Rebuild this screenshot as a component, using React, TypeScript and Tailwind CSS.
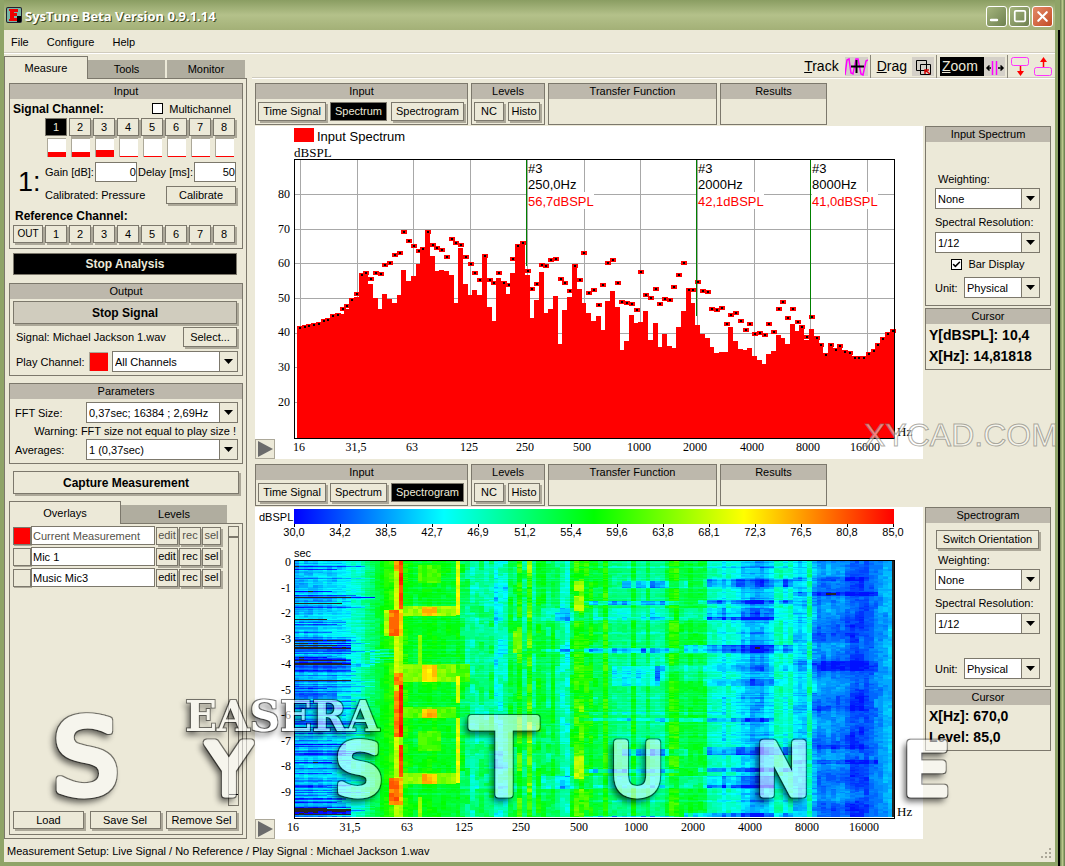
import React from "react";
import { Check, Minus, Square, X } from "lucide-react";

const channels = [1, 2, 3, 4, 5, 6, 7, 8];

// Bar tops and peak dots, one entry per 1/12 octave, in thirds of a pixel
const bars = [
  530, 528, 525, 522, 519, 509, 506, 494, 491, 491, 478, 445, 441, 371, 366, 402, 444, 478, 432, 447, 459,
  435, 360, 393, 378, 342, 293, 240, 318, 363, 360, 363, 375, 459, 294, 402, 435, 420, 435, 312, 471, 514,
  384, 396, 432, 369, 282, 274, 375, 504, 450, 366, 489, 477, 438, 582, 480, 441, 342, 417, 459, 489, 514,
  498, 540, 453, 423, 471, 600, 573, 495, 519, 516, 483, 570, 519, 591, 552, 588, 594, 531, 483, 416, 459,
  525, 552, 564, 591, 609, 606, 606, 531, 573, 597, 600, 594, 618, 630, 642, 612, 603, 555, 564, 582, 522,
  543, 526, 570, 537, 560, 580, 611, 580, 596, 584, 602, 606, 619, 619, 619, 608, 598, 580, 563, 548, 538,
];

const peaks = [
  533, 530, 527, 524, 521, 512, 509, 497, 494, 477, 468, 450, 432, 374, 369, 387, 369, 372, 345, 339, 315,
  309, 246, 272, 288, 303, 296, 246, 285, 294, 300, 321, 267, 279, 285, 321, 342, 369, 390, 318, 390, 399,
  369, 399, 405, 327, 288, 279, 363, 417, 402, 345, 348, 330, 327, 387, 399, 423, 348, 390, 309, 429, 420,
  465, 405, 339, 330, 399, 456, 459, 462, 480, 366, 435, 444, 417, 462, 447, 450, 411, 375, 339, 420, 420,
  396, 423, 426, 477, 480, 474, 522, 495, 489, 513, 540, 522, 552, 549, 555, 522, 546, 477, 456, 504, 477,
  516, 531, 561, 501, 564, 584, 614, 584, 600, 588, 606, 608, 624, 624, 624, 612, 602, 584, 567, 552, 542,
];

const frequencies = ["16", "31,5", "63", "125", "250", "500", "1000", "2000", "4000", "8000", "16000"];

const markers = [
  { x: 271, end: 140, freq: "250,0Hz", level: "56,7dBSPL" },
  { x: 441, end: 190, freq: "2000Hz", level: "42,1dBSPL" },
  { x: 555, end: 193, freq: "8000Hz", level: "41,0dBSPL" },
];

// Mean level in dB for each column of the spectrogram
const columns = [
  41, 41, 41, 41, 41, 42, 42, 42, 42, 43, 43, 44, 46, 46, 48, 50, 52, 54, 56, 58, 60, 68, 66, 59, 57, 55, 56,
  57, 57, 57, 56, 56, 56, 55, 57, 54, 52, 49, 50, 51, 50, 52, 46, 47, 48, 55, 53, 60, 52, 62, 51, 56, 54, 52,
  55, 51, 48, 47, 55, 60, 61, 58, 57, 54, 54, 60, 52, 51, 51, 51, 50, 57, 50, 50, 54, 50, 50, 50, 55, 60,
  60, 55, 54, 56, 55, 55, 55, 48, 48, 47, 44, 48, 46, 45, 42, 42, 40, 40, 40, 42, 43, 49, 49, 45, 48, 43,
  42, 42, 49, 40, 37, 37, 38, 37, 37, 37, 36, 34, 34, 34, 34, 36, 37, 38, 39, 40,
];

const rand = (a: number, b: number) => {
  const n = Math.sin(a * 12.9898 + b * 78.233) * 43758.5453;
  return n - Math.floor(n);
};

// [first column, last column, top, bottom, level]
const hot = [
  [22, 22, 0, 48, 82], [21, 21, 0, 10, 76], [20, 21, 49, 75, 79], [19, 19, 49, 75, 67], [22, 22, 49, 75, 74],
  [21, 22, 112, 124, 79], [22, 22, 124, 176, 84], [21, 21, 130, 176, 78], [22, 22, 184, 216, 82],
  [20, 21, 217, 244, 79], [22, 22, 217, 244, 75], [23, 33, 45, 55, 66], [27, 29, 46, 55, 75],
  [23, 33, 103, 121, 64], [34, 36, 103, 121, 61], [27, 29, 104, 121, 73], [23, 33, 146, 157, 62],
  [27, 29, 148, 157, 75], [23, 33, 212, 223, 65], [27, 29, 213, 223, 75], [34, 34, 0, 54, 70],
  [34, 34, 115, 142, 70], [34, 34, 157, 222, 70], [26, 26, 74, 103, 64], [26, 30, 4, 22, 61],
  [26, 30, 170, 190, 61], [26, 26, 236, 256, 66], [49, 49, 0, 12, 66], [49, 49, 161, 182, 66],
  [59, 60, 20, 30, 67], [59, 60, 35, 50, 67], [59, 60, 195, 218, 67], [46, 47, 70, 92, 64],
];

// [first column, last column, top, bottom, drop], repeating every 168px
const cold = [
  [69, 82, 20, 27, 13], [86, 104, 18, 26, 10], [61, 80, 40, 44, 13], [85, 104, 39, 43, 10], [86, 102, 47, 59, 6],
  [63, 86, 47, 56, 6], [63, 100, 56, 59, 9], [61, 80, 87, 92, 14], [82, 104, 84, 92, 12], [52, 62, 88, 91, 8],
  [67, 76, 105, 125, 9], [76, 86, 105, 120, 5], [77, 104, 104, 110, 6], [86, 102, 118, 125, 7],
  [76, 100, 157, 161, 10], [60, 76, 157, 160, 9], [60, 90, 151, 154, 6], [105, 120, 16, 20, 4],
  [105, 122, 31, 35, 5], [105, 118, 72, 82, 3], [105, 122, 100, 110, 4], [105, 120, 145, 150, 3],
  [52, 62, 47, 60, 6], [41, 44, 22, 40, 5], [35, 60, 57, 59, 5], [60, 103, 5, 7, 4], [60, 103, 71, 73, 4],
  [60, 103, 136, 138, 4],
];

const deep = [[78, 90, 13], [98, 104, 16], [105, 110, 10], [248, 256, 16]];

const levelAt = (col: number, y: number) => {
  const t = y % 168;
  const spread = col > 34 && col < 64 ? 7 : 3;
  let level = columns[col] + (rand(col, Math.floor((y + col * 3) / 9)) - 0.5) * spread + (rand(col, y >> 1) - 0.5) * 2;
  if (col < 17) {
    const streak = rand(7, y);
    const reach = 6 + rand(3, y) * 11;
    level += (rand(5, y) - 0.5) * 4;
    if (streak > 0.55 && col < reach) level -= (streak - 0.4) * 16;
    if (streak > 0.975 && col < reach) level = 28;
    if (col < 12) {
      deep.forEach(([top, bottom, drop]) => {
        if (y >= top && y < bottom) level -= drop * rand(11, y);
      });
    }
  }
  if (col >= 16 && col < 21 && y >= 88 && y < 102) level -= 14 * rand(Math.floor(col / 3), y);
  if (col > 22 && col < 110 && rand(21, y) > 0.8) level -= 2.5;
  cold.forEach(([a, b, top, bottom, drop]) => {
    if (col >= a && col <= b && t >= top && t < bottom) level -= drop * (0.4 + rand(col, top) * 0.7);
  });
  if (col >= 108 && col < 120) level += Math.sin(y / 6 + col / 9) * 1.5;
  if (col >= 12) level = Math.max(level, 31);
  hot.forEach(([a, b, top, bottom, value]) => {
    if (col >= a && col <= b && y >= top && y < bottom) level = value + (rand(col, y >> 2) - 0.5) * 4;
  });
  if ((col > 111 && col < 114 && y > 31 && y < 34) || (col === 97 && y > 85 && y < 88)) level = 28;
  return level;
};

const stops = [[0, 0, 255], [0, 255, 255], [0, 255, 0], [255, 255, 0], [255, 0, 0]];

const shade = (step: number) => {
  if (step < 0) return "#262626";
  const p = Math.min(step / 15, 3.999);
  const i = Math.floor(p);
  const rgb = stops[i].map((c, k) => Math.round(c + (stops[i + 1][k] - c) * (p - i)));
  return `rgb(${rgb.join(",")})`;
};

// Cells of the same shade share one path
const cells = () => {
  const paths: Record<number, string> = {};
  for (let col = 0; col < columns.length; col++) {
    const x = 39 + Math.round(col * 4.75);
    const w = 39 + Math.round((col + 1) * 4.75) - x;
    let start = 0;
    let last = NaN;
    for (let y = 0; y <= 256; y++) {
      const level = levelAt(col, y);
      const step = level < 29 ? -1 : Math.max(0, Math.min(60, Math.round(((level - 30) / 55) * 60)));
      if (y === 256 || step !== last) {
        if (y > 0) paths[last] = (paths[last] || "") + `M${x} ${54 + start}h${w}v${y - start}h${-w}z`;
        start = y;
        last = step;
      }
    }
  }
  return Object.entries(paths);
};

const Btn = ({ children, className = "", active = false }: { children?: React.ReactNode; className?: string; active?: boolean }) => (
  <button
    className={`flex items-center justify-center border border-[#7c786c] whitespace-nowrap leading-none ${
      active ? "bg-black text-[#ece9d8]" : "bg-[#ece9d8] shadow-[2px_2px_0_#aca899]"
    } ${className}`}
  >
    {children}
  </button>
);

const Group = ({ title, children, className = "" }: { title: string; children?: React.ReactNode; className?: string }) => (
  <section className={`border border-[#7c786c] ${className}`}>
    <h2 className="h-[15px] bg-[#bdb8ac] text-center leading-[15px]">{title}</h2>
    {children}
  </section>
);

const Combo = ({ id, value, className = "" }: { id: string; value: string; className?: string }) => (
  <div className={`relative h-[21px] ${className}`}>
    <select
      id={id}
      className="h-full w-full appearance-none border border-[#7c786c] bg-white pl-[2px] pr-5 outline-none"
    >
      <option>{value}</option>
    </select>
    <span className="pointer-events-none absolute inset-y-px right-px flex w-[18px] items-center justify-center border-l border-[#7c786c] bg-[#ece9d8]">
      <svg width="9" height="5" viewBox="0 0 9 5">
        <path d="M0 0h9L4.500 5z" />
      </svg>
    </span>
  </div>
);

const Tab = ({ children, className = "" }: { children: React.ReactNode; className?: string }) => (
  <button className={`mb-px h-[18px] bg-[#b0ad9f] ${className}`}>{children}</button>
);

const InputGroup = () => (
  <Group title="Input" className="h-[166px]">
    <div className="flex h-[19px] items-center justify-between pl-[3px] pr-[11px]">
      <b className="text-[12px]">Signal Channel:</b>
      <label className="flex items-center gap-[6px]">
        <input type="checkbox" className="size-[11px] appearance-none border border-black bg-white" />
        Multichannel
      </label>
    </div>
    <div className="flex gap-[2px] pl-[35px]">
      {channels.map((c) => (
        <Btn key={c} active={c === 1} className="h-[18px] w-[22px]">{c}</Btn>
      ))}
    </div>
    <div className="mt-[2px] flex gap-[5px] pl-[37px]">
      {channels.map((c) => (
        <div key={c} className="flex h-[19px] w-[19px] flex-col justify-end border-l border-t border-[#aca899] bg-white">
          <div className={`bg-[#f00] ${c === 3 ? "h-[7px]" : c < 3 ? "h-[5px]" : "h-px"}`} />
        </div>
      ))}
    </div>
    <div className="mt-[5px] flex">
      <div className="w-[35px] pl-2 pt-1 text-[27px] leading-[32px]">1:</div>
      <div className="min-w-0 flex-1 pr-[6px]">
        <div className="flex items-center justify-between whitespace-nowrap">
          <label htmlFor="gain">Gain [dB]:</label>
          <input id="gain" defaultValue="0" className="h-5 w-[42px] border border-[#7c786c] bg-white text-right" />
          <label htmlFor="delay">Delay [ms]:</label>
          <input id="delay" defaultValue="50" className="h-5 w-[42px] border border-[#7c786c] bg-white text-right" />
        </div>
        <div className="mt-1 flex items-center justify-between">
          <span>Calibrated: Pressure</span>
          <Btn className="h-[18px] w-[70px]">Calibrate</Btn>
        </div>
      </div>
    </div>
    <b className="block pl-[5px] pt-1 text-[12px] leading-[17px]">Reference Channel:</b>
    <div className="flex gap-[2px] pl-[3px]">
      <Btn className="h-[18px] w-[30px] text-[10px]">OUT</Btn>
      {channels.map((c) => (
        <Btn key={c} className="h-[18px] w-[22px]">{c}</Btn>
      ))}
    </div>
  </Group>
);

const overlays = [
  { name: "Current Measurement", color: "bg-[#f00]", text: "text-[#55524a]" },
  { name: "Mic 1", color: "bg-[#ece9d8]", text: "text-black" },
  { name: "Music Mic3", color: "bg-[#ece9d8]", text: "text-black" },
];

const Overlays = () => (
  <div className="mt-[7px] flex flex-1 flex-col">
    <div className="relative z-10 -mb-px flex items-end">
      <button className="h-[23px] w-[112px] border border-b-0 border-[#7c786c] bg-[#ece9d8]">Overlays</button>
      <Tab className="w-[106px]">Levels</Tab>
    </div>
    <div className="flex flex-1 flex-col border border-[#7c786c] px-[3px] pb-[5px] pt-[2px]">
      <div className="flex flex-1 justify-between">
        <div className="flex flex-col gap-[2px]">
          {overlays.map((o) => (
            <div key={o.name} className={`flex h-[19px] items-center ${o.text}`}>
              <button aria-label={`Color of ${o.name}`} className={`h-[18px] w-[18px] border border-[#7c786c] shadow-[1px_1px_0_#aca899] ${o.color}`} />
              <input aria-label="Overlay name" defaultValue={o.name} className="h-[19px] w-[124px] border border-[#7c786c] bg-white px-px" />
              <Btn className="ml-px h-[18px] w-[22px]">edit</Btn>
              <Btn className="ml-px h-[18px] w-[22px]">rec</Btn>
              <Btn className="ml-px h-[18px] w-[19px]">sel</Btn>
            </div>
          ))}
        </div>
        <div className="flex w-[11px] flex-col justify-between border border-[#7c786c]">
          <div className="h-[11px] border-b-2 border-[#7c786c]" />
          <div className="h-[11px] border-t border-black" />
        </div>
      </div>
      <div className="mt-[5px] flex justify-between pr-[2px]">
        <Btn className="h-[18px] w-[71px]">Load</Btn>
        <Btn className="h-[18px] w-[71px]">Save Sel</Btn>
        <Btn className="h-[18px] w-[71px]">Remove Sel</Btn>
      </div>
    </div>
  </div>
);

const LeftPanel = () => (
  <aside className="flex w-[243px] shrink-0 flex-col pt-[2px]">
    <div className="relative z-10 -mb-px flex items-end">
      <button className="h-[23px] w-[84px] border border-b-0 border-[#7c786c] bg-[#ece9d8]">Measure</button>
      <Tab className="w-[77px]">Tools</Tab>
      <Tab className="ml-[2px] w-[78px]">Monitor</Tab>
    </div>
    <div className="flex flex-1 flex-col border border-[#7c786c] pb-[3px] pl-1 pr-[3px] pt-1">
      <InputGroup />
      <Btn active className="ml-1 mr-[6px] mt-1 h-[22px] text-[12px] font-bold">Stop Analysis</Btn>
      <Group title="Output" className="mt-2 h-[93px]">
        <button className="ml-[3px] mt-[2px] flex h-[23px] w-[224px] items-center justify-center border border-[#7c786c] bg-[#d0ccbe] text-[12px] font-bold shadow-[2px_2px_0_#aca899]">
          Stop Signal
        </button>
        <div className="mt-[3px] flex items-center justify-between pl-[6px] pr-[5px]">
          <span className="whitespace-nowrap">Signal: Michael Jackson 1.wav</span>
          <Btn className="h-5 w-[54px]">Select...</Btn>
        </div>
        <div className="mt-1 flex items-center pl-[6px] pr-1">
          <label htmlFor="play" className="flex-1">Play Channel:</label>
          <span className="mr-1 size-[19px] border-l border-t border-[#aca899] bg-[#f00]" />
          <Combo id="play" value="All Channels" className="w-[126px]" />
        </div>
      </Group>
      <Group title="Parameters" className="mt-[7px] h-[81px]">
        <div className="mt-[3px] flex items-center justify-between pl-[5px] pr-1">
          <label htmlFor="fft">FFT Size:</label>
          <Combo id="fft" value="0,37sec; 16384 ; 2,69Hz" className="w-[152px]" />
        </div>
        <p className="whitespace-nowrap pr-[6px] text-right leading-4">Warning: FFT size not equal to play size !</p>
        <div className="flex items-center justify-between pl-[5px] pr-1">
          <label htmlFor="avg">Averages:</label>
          <Combo id="avg" value="1  (0,37sec)" className="w-[152px]" />
        </div>
      </Group>
      <Btn className="ml-1 mr-1 mt-[7px] h-[23px] text-[12px] font-bold">Capture Measurement</Btn>
      <Overlays />
    </div>
  </aside>
);

const Toolbar = () => (
  <div className="flex h-[25px] items-center justify-end border-b border-white pr-[2px] text-[14px] shadow-[0_-1px_0_#d0ccbe_inset]">
    <button><u>T</u>rack</button>
    <svg width="23" height="19" viewBox="0 0 23 19" className="ml-[6px] bg-[#d4d0c8]" fill="none">
      <path d="M0 18 2 3l2-1 2 14 2 1 3-15 2 0 3 15 2 1 3-14 2-1" stroke="#f0f" strokeWidth="1.500" />
      <path d="M11.500 3v13M6 9.500h13" stroke="#000" strokeWidth="2" />
    </svg>
    <i className="mx-[2px] h-[23px] w-px bg-[#8a877a]" />
    <button className="ml-1"><u>D</u>rag</button>
    <svg width="22" height="19" viewBox="0 0 22 19" className="ml-[5px] bg-[#d4d0c8]" fill="none">
      <path d="M4.500 3.500h10v10h-10zM8.500 7.500h10v10h-10z" stroke="#000" />
      <path d="m13 13 5 4m-5 0v-4h4" stroke="#d00000" strokeWidth="1.500" />
    </svg>
    <i className="ml-[2px] mr-[3px] h-[23px] w-px bg-[#8a877a]" />
    <button className="h-[19px] w-[44px] bg-black pl-[2px] text-left leading-[19px] text-[#ece9d8]"><u>Z</u>oom</button>
    <svg width="21" height="19" viewBox="0 0 21 19" className="bg-[#d4d0c8]" fill="none">
      <path d="M8.500 4v14M12.500 4v14" stroke="#f0f" strokeWidth="1.500" />
      <path d="M3 11h4M14 11h5M5.500 8.500 3 11l2.500 2.500M16.500 8.500 19 11l-2.500 2.500" stroke="#000" strokeWidth="1.500" />
    </svg>
    <i className="mx-[2px] h-[23px] w-px bg-[#8a877a]" />
    <svg width="20" height="20" viewBox="0 0 20 20" fill="none">
      <rect x="1.500" y="1.500" width="17" height="8" rx="2" stroke="#f3f" />
      <path d="M10.500 10v7" stroke="red" strokeWidth="1.500" />
      <path d="M7 15h7l-3.500 5z" fill="red" />
    </svg>
    <svg width="20" height="20" viewBox="0 0 20 20" fill="none" className="ml-[3px]">
      <rect x="1.500" y="11.500" width="17" height="8" rx="2" stroke="#f3f" />
      <path d="M10.500 4v7" stroke="red" strokeWidth="1.500" />
      <path d="M7 6h7l-3.500-5z" fill="red" />
    </svg>
  </div>
);

const ViewBar = ({ active }: { active: string }) => (
  <div className="flex h-[42px] gap-[3px]">
    <Group title="Input" className="w-[213px]">
      <div className="flex gap-1 pl-[2px] pt-[3px]">
        <Btn active={active === "Time Signal"} className="h-[19px] w-[68px]">Time Signal</Btn>
        <Btn active={active === "Spectrum"} className="h-[19px] w-[57px]">Spectrum</Btn>
        <Btn active={active === "Spectrogram"} className="h-[19px] w-[73px]">Spectrogram</Btn>
      </div>
    </Group>
    <Group title="Levels" className="w-[74px]">
      <div className="flex gap-1 pl-[2px] pt-[3px]">
        <Btn className="h-[19px] w-[30px]">NC</Btn>
        <Btn className="h-[19px] w-[32px]">Histo</Btn>
      </div>
    </Group>
    <Group title="Transfer Function" className="w-[169px]" />
    <Group title="Results" className="w-[107px]" />
  </div>
);

const PlayButton = () => (
  <button aria-label="Play" className="absolute bottom-0 left-0 flex size-5 items-center justify-center border border-[#aca899] bg-[#ece9d8]">
    <svg width="15" height="16" viewBox="0 0 15 16">
      <path d="M0 0 15 8 0 16z" fill="#6b6b6b" />
    </svg>
  </button>
);

const Spectrum = () => (
  <div className="relative min-w-0 flex-1 bg-white">
    <svg viewBox="0 0 668 333" className="block w-full">
      <rect x="39" y="2" width="20" height="14" fill="#f00" />
      <text x="62" y="15" className="text-[13px]">Input Spectrum</text>
      <g className="font-['Liberation_Serif',serif] text-[13px]">
        <text x="39" y="31">dBSPL</text>
        <text x="642" y="310">Hz</text>
      </g>
      <g stroke="#a8a8a8" shapeRendering="crispEdges">
        {frequencies.map((f, i) => (
          <path key={f} d={`M${45.5 + Math.round(i * 56.7)} 34v278`} />
        ))}
        {[68, 103, 137, 172, 207, 241, 276].map((y) => (
          <path key={y} d={`M40 ${y + 0.5}h600`} />
        ))}
      </g>
      <g shapeRendering="crispEdges">
        {bars.map((top, i) => (
          <rect key={i} x={42 + Math.round(i * 4.74)} y={Math.round(top / 3) + 24} width="5" height={288 - Math.round(top / 3)} fill="#f00" />
        ))}
        {peaks.map((y, i) => (
          <g key={i} transform={`translate(${42 + Math.round(i * 4.74)} ${Math.round(y / 3) + 22})`}>
            <path d="M0 0h6v4H0z" fill="#f00" />
            <path d="M2 1h2v2H2z" />
          </g>
        ))}
        <path d="M39.500 312.500v-279h600v279z" fill="none" stroke="#000" />
      </g>
      {markers.map((m) => (
        <g key={m.x} className="text-[13px]">
          <path d={`M${m.x + 2} 36h48v30h18v17h-66z`} fill="#fff" />
          <path d={`M${m.x + 0.5} 34V${m.end}`} stroke="#008000" shapeRendering="crispEdges" />
          <text x={m.x + 2} y="47">#3</text>
          <text x={m.x + 2} y="63">{m.freq}</text>
          <text x={m.x + 2} y="80" fill="#f00">{m.level}</text>
        </g>
      ))}
      <g className="font-['Liberation_Serif',serif] text-[12px]" textAnchor="middle">
        {[80, 70, 60, 50, 40, 30, 20].map((v, i) => (
          <text key={v} x="29" y={Math.round(72 + i * 34.6)}>{v}</text>
        ))}
        {frequencies.map((f, i) => (
          <text key={f} x={Math.round(44 + i * 56.6)} y="325">{f}</text>
        ))}
      </g>
    </svg>
    <PlayButton />
  </div>
);

const scale = ["30,0", "34,2", "38,5", "42,7", "46,9", "51,2", "55,4", "59,6", "63,8", "68,1", "72,3", "76,5", "80,8", "85,0"];

const Spectrogram = () => (
  <div className="relative min-w-0 flex-1 bg-white">
    <svg viewBox="0 0 668 332" className="block w-full">
      <defs>
        <linearGradient id="levels">
          <stop offset="0" stopColor="#00f" />
          <stop offset=".25" stopColor="#0ff" />
          <stop offset=".5" stopColor="#0f0" />
          <stop offset=".75" stopColor="#ff0" />
          <stop offset="1" stopColor="#f00" />
        </linearGradient>
      </defs>
      <rect x="39" y="2" width="600" height="15" fill="url(#levels)" />
      <text x="4" y="14" className="text-[11px]">dBSPL</text>
      {scale.map((s, i) => (
        <g key={s} className="text-[11px]" textAnchor="middle">
          <path d={`M${39.5 + Math.round(i * 46.1)} 17v3`} stroke="#000" />
          <text x={Math.round(39 + i * 46.1)} y="29">{s}</text>
        </g>
      ))}
      <text x="39" y="50" className="text-[11px]">sec</text>
      <g shapeRendering="crispEdges">
        {cells().map(([step, d]) => (
          <path key={step} d={d} fill={shade(Number(step))} />
        ))}
        <path d="M637 54h2v256h-2z" fill="#262626" />
        <path d="M39.500 311.500v-258h600v258z" fill="none" stroke="#000" />
      </g>
      <g className="font-['Liberation_Serif',serif] text-[12px]">
        {[0, 1, 2, 3, 4, 5, 6, 7, 8, 9].map((s) => (
          <text key={s} x="36" y={Math.round(59 + s * 25.5)} textAnchor="end">{s ? -s : 0}</text>
        ))}
        {frequencies.map((f, i) => (
          <text key={f} x={Math.round(38 + i * 57.1)} y="324" textAnchor="middle">{f}</text>
        ))}
        <text x="642" y="309" className="text-[13px]">Hz</text>
      </g>
    </svg>
    <PlayButton />
  </div>
);

const Cursor = ({ lines }: { lines: string[] }) => (
  <Group title="Cursor" className="mt-[2px] h-[62px]">
    <div className="pl-[3px] pt-px text-[14px] font-bold leading-[21px]">
      {lines.map((l) => (
        <p key={l}>{l}</p>
      ))}
    </div>
  </Group>
);

const SidePanel = ({ id, title, spectrum, lines }: { id: string; title: string; spectrum?: boolean; lines: string[] }) => (
  <div className="ml-[2px] w-[126px] shrink-0">
    <Group title={title} className="h-[180px]">
      <div className="px-[9px]">
        <div className="flex h-[30px] items-end">
          {!spectrum && <Btn className="mb-1 ml-px h-[19px] w-[103px]">Switch Orientation</Btn>}
        </div>
        <label htmlFor={`${id}-weighting`} className="block h-[16px] pl-[3px] leading-[14px]">Weighting:</label>
        <Combo id={`${id}-weighting`} value="None" className="w-[105px]" />
        <label htmlFor={`${id}-resolution`} className="mt-[5px] block h-[18px] whitespace-nowrap leading-[16px]">Spectral Resolution:</label>
        <Combo id={`${id}-resolution`} value="1/12" className="w-[105px]" />
        <div className="flex h-[24px] items-center justify-center pb-[2px]">
          {spectrum && (
            <label className="flex items-center gap-[6px]">
              <span className="relative flex size-[11px]">
                <input type="checkbox" defaultChecked className="size-[11px] appearance-none border border-black bg-white" />
                <Check className="pointer-events-none absolute left-px top-px size-[9px]" strokeWidth={4} />
              </span>
              Bar Display
            </label>
          )}
        </div>
        <div className="flex w-[105px] items-center justify-between">
          <label htmlFor={`${id}-unit`}>Unit:</label>
          <Combo id={`${id}-unit`} value="Physical" className="w-[76px]" />
        </div>
      </div>
    </Group>
    <Cursor lines={lines} />
  </div>
);

const TitleBar = () => (
  <header className="flex h-[30px] items-center bg-linear-to-b from-[#8a9d62] via-[#b4c18a] to-[#a3b077] pl-[2px] pr-[2px]">
    <svg width="16" height="16" viewBox="0 0 16 16">
      <rect width="16" height="16" rx="2" fill="#223" />
      <rect x="1" y="1" width="14" height="14" rx="1" fill="#79b5a5" />
      <path d="M3 2h9v3H8v1h3v3H8v2h4v3H3v-2h1V4H3z" fill="#e00" />
      <path d="M11 9h4v6h-4z" />
    </svg>
    <h1 className="ml-[3px] flex-1 pt-[2px] font-['Open_Sans',sans-serif] text-[13px] font-bold text-white [text-shadow:1px_1px_0_#3c4620]">
      SysTune Beta Version 0.9.1.14
    </h1>
    <div className="flex gap-[2px] pt-[2px] text-white">
      <button aria-label="Minimize" className="flex size-[21px] items-end justify-start rounded-[3px] border border-white bg-linear-to-br from-[#a5b57e] to-[#6f8150] pb-px pl-[2px]">
        <Minus className="size-[10px]" strokeWidth={6} />
      </button>
      <button aria-label="Maximize" className="flex size-[21px] items-center justify-center rounded-[3px] border border-white bg-linear-to-br from-[#a5b57e] to-[#6f8150]">
        <Square className="size-[14px]" strokeWidth={3} />
      </button>
      <button aria-label="Close" className="flex size-[21px] items-center justify-center rounded-[3px] border border-white bg-linear-to-br from-[#e38a68] to-[#c34a20]">
        <X className="size-[17px]" strokeWidth={3} />
      </button>
    </div>
  </header>
);

const Watermark = () => (
  <svg viewBox="0 0 1065 866" className="pointer-events-none absolute left-0 top-0 w-full">
    <defs>
      {/* translucent body, thin rim, and a shadow that only falls outside the letters */}
      <filter id="glass" x="-10%" y="-20%" width="120%" height="150%" colorInterpolationFilters="sRGB">
        <feGaussianBlur in="SourceAlpha" stdDeviation="3" />
        <feOffset dx="-3" dy="4" />
        <feComposite operator="out" in2="SourceAlpha" />
        <feComponentTransfer result="shadow">
          <feFuncA type="linear" slope=".6" />
        </feComponentTransfer>
        <feMorphology in="SourceAlpha" operator="dilate" radius="1" />
        <feComposite operator="out" in2="SourceAlpha" />
        <feComponentTransfer result="rim">
          <feFuncA type="linear" slope=".5" />
        </feComponentTransfer>
        <feComponentTransfer in="SourceGraphic" result="body">
          <feFuncA type="linear" slope=".55" />
        </feComponentTransfer>
        <feMerge>
          <feMergeNode in="shadow" />
          <feMergeNode in="rim" />
          <feMergeNode in="body" />
        </feMerge>
      </filter>
    </defs>
    <g
      className="font-['DejaVu_Sans',sans-serif]"
      filter="url(#glass)"
      fill="#fff"
      stroke="#fff"
      strokeWidth="7"
      strokeLinejoin="round"
      strokeLinecap="round"
      textAnchor="middle"
    >
      <text y="794" className="text-[104px]" x="86">S</text>
      <text y="794" className="text-[70px]" x="229">Y</text>
      <text y="794" className="text-[70px]" x="359">S</text>
      <text y="794" className="text-[104px]" x="504">T</text>
      <text y="794" className="text-[70px]" x="637">U</text>
      <text y="794" className="text-[70px]" x="783">N</text>
      <text y="794" className="text-[70px]" x="926">E</text>
    </g>
    <text x="185" y="731" className="font-['DejaVu_Serif',serif] text-[42px] font-bold" fill="#fff" filter="url(#glass)">
      EASERA
    </text>
    <text x="864" y="446" className="text-[32px]" fill="#fff" fillOpacity=".5" stroke="#77756c" strokeOpacity=".6">
      XYCAD.COM
    </text>
  </svg>
);

const App = () => (
  <div className="relative flex min-h-screen overflow-hidden bg-[#8fa468] font-['Liberation_Sans',Arial,sans-serif] text-[11px] leading-[14px] text-black">
    <main className="flex min-w-0 flex-1 flex-col rounded-tl-[6px] border-b-4 border-l-4 border-r-[3px] border-b-[#8fa468] border-l-[#8fa468] border-r-[#8fa468] bg-[#ece9d8]">
      <TitleBar />
      <nav className="flex h-6 items-center gap-[18px] border-b border-white pl-[7px] shadow-[0_-1px_0_#d0ccbe_inset]">
        <button>File</button>
        <button>Configure</button>
        <button>Help</button>
      </nav>
      <div className="flex min-h-0 flex-1">
        <LeftPanel />
        <div className="ml-[5px] min-w-0 flex-1">
          <Toolbar />
          <div className="pl-[3px] pr-1 pt-1">
            <ViewBar active="Spectrum" />
            <div className="mt-px flex items-start">
              <Spectrum />
              <SidePanel id="spectrum" title="Input Spectrum" spectrum lines={["Y[dBSPL]: 10,4", "X[Hz]: 14,81818"]} />
            </div>
            <div className="h-[5px]" />
            <ViewBar active="Spectrogram" />
            <div className="mt-px flex items-start">
              <Spectrogram />
              <SidePanel id="spectrogram" title="Spectrogram" lines={["X[Hz]: 670,0", "Level: 85,0"]} />
            </div>
          </div>
        </div>
      </div>
      <footer className="flex h-[23px] items-center justify-between pl-[3px] pt-px">
        <span>Measurement Setup: Live Signal / No Reference / Play Signal : Michael Jackson 1.wav</span>
        <svg width="13" height="13" viewBox="0 0 13 13" className="mr-[2px] mt-1" fill="#aca899">
          <path d="M9 1h2v2H9zM9 5h2v2H9zM5 5h2v2H5zM9 9h2v2H9zM5 9h2v2H5zM1 9h2v2H1z" />
        </svg>
      </footer>
    </main>
    <div className="mt-[30px] w-[2px] bg-black" />
    <div className="w-[5px] bg-linear-to-r from-[#6d8352] via-[#b9c78c] to-[#5f7648]" />
    <Watermark />
  </div>
);

export default App;
